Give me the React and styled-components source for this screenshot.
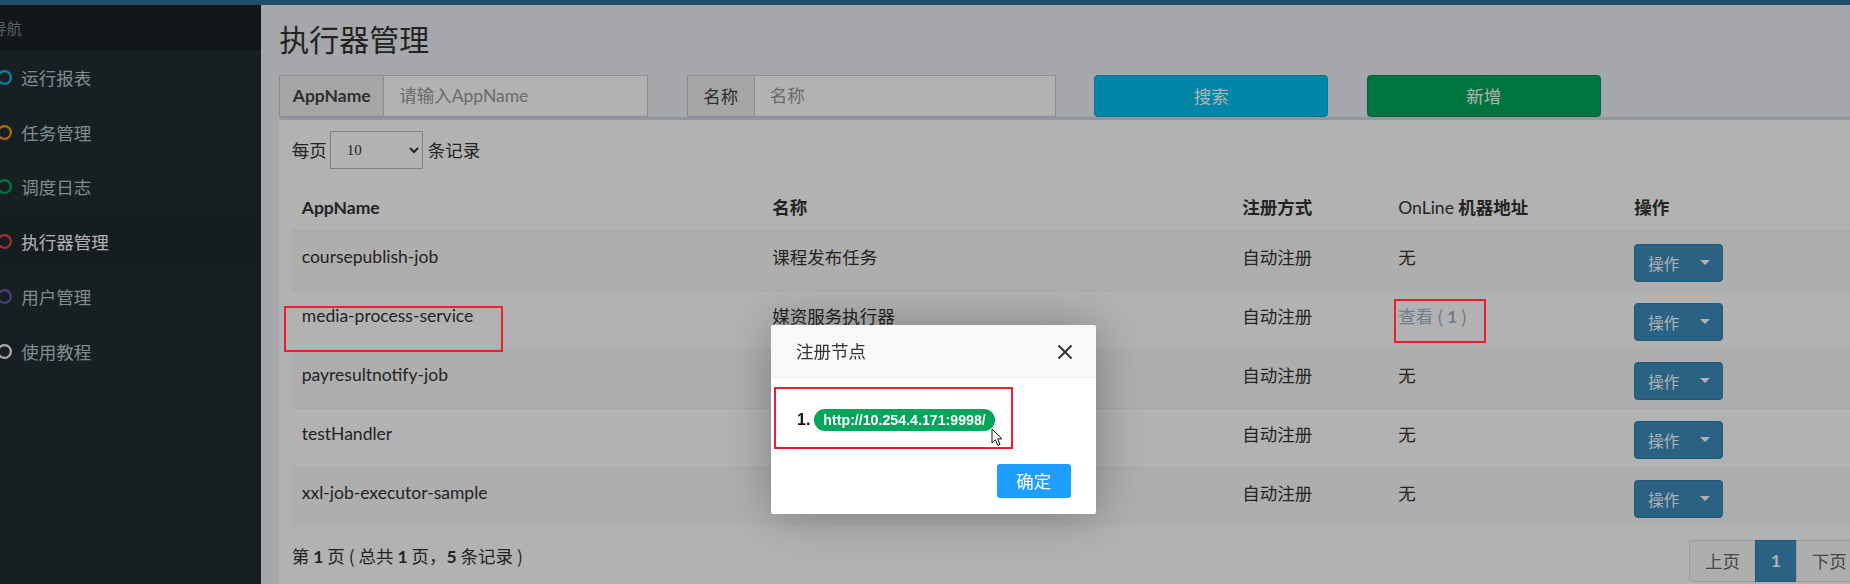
import React from "react";
import styled, { createGlobalStyle } from "styled-components";

const GlobalStyle = createGlobalStyle`
  * { box-sizing: border-box; }
  html, body {
    margin: 0;
    padding: 0;
    width: 1850px;
    height: 584px;
    overflow: hidden;
    background: #ecf0f5;
  }
  body {
    font-family: Lato, "Noto Sans CJK SC", sans-serif;
    font-size: 17.5px;
    line-height: 25px;
    color: #333;
  }
`;

const Shell = styled.div`
  margin-left: -27px;
  width: 1921px;
  height: 584px;
  display: flex;
  flex-direction: column;
`;

const TopBar = styled.div`
  flex: none;
  height: 5px;
  background: #2f6f98;
`;

const Main = styled.div`
  flex: 1;
  display: flex;
  min-height: 0;
`;

const Sidebar = styled.aside`
  flex: none;
  width: 287.5px;
  background: #222d32;
`;

const MenuHeader = styled.div`
  background: #1a2226;
  color: #7f8c97;
  font-family: "Noto Sans CJK SC", sans-serif;
  font-size: 15px;
  line-height: 20px;
  padding: 12.5px 25px 12.5px 18.75px;
`;

const MenuItem = styled.div`
  display: flex;
  align-items: center;
  gap: 4.5px;
  padding: 14.9px 6.25px 14.9px 18.75px;
  font-family: "Noto Sans CJK SC", sans-serif;
  font-size: 17.5px;
  line-height: 25px;
  color: ${(p) => (p.$active ? "#ffffff" : "#b8c7ce")};
  background: ${(p) => (p.$active ? "#202a2f" : "transparent")};
`;

const RingIcon = ({ color }) => (
  <svg width="25" height="25" viewBox="0 0 25 25">
    <circle cx="12.5" cy="12.5" r="6.4" fill="none" stroke={color} strokeWidth="2.3" />
  </svg>
);

const Content = styled.section`
  flex: 1;
  min-width: 0;
  padding: 17px 18.75px 0;
`;

const Title = styled.h1`
  margin: 0;
  font-family: "Noto Sans CJK SC", sans-serif;
  font-size: 30px;
  line-height: 33px;
  font-weight: 400;
  color: #333;
`;

const SearchRow = styled.div`
  display: flex;
  gap: 38.5px;
  margin-top: 19.5px;
  height: 42.5px;
`;

const InputGroup = styled.div`
  display: flex;
  width: 369px;
  border: 1.25px solid #ccc;
  background: #fff;
`;

const Addon = styled.span`
  flex: none;
  display: flex;
  align-items: center;
  justify-content: center;
  width: ${(p) => p.$w}px;
  background: #eee;
  border-right: 1.25px solid #ccc;
  color: #444;
  font-weight: ${(p) => (p.$bold ? 700 : 400)};
`;

const Input = styled.input`
  flex: 1;
  min-width: 0;
  border: 0;
  padding: 0 15px;
  font: inherit;
  background: transparent;
  color: #555;
  &::placeholder {
    color: #999;
  }
`;

const ActionBtn = styled.button`
  width: 234px;
  border: 1.25px solid ${(p) => p.$border};
  background: ${(p) => p.$bg};
  color: #fff;
  font-family: "Noto Sans CJK SC", sans-serif;
  font-size: 17.5px;
  border-radius: 3.75px;
  padding: 0;
`;

const Box = styled.div`
  background: #fff;
  border-top: 3.75px solid #d2d6de;
  border-radius: 3.75px;
  padding: 11px 12.5px 12.5px;
  height: 600px;
`;

const LengthRow = styled.div`
  display: flex;
  align-items: center;
  gap: 3px;
  height: 37.5px;
`;

const Select = styled.select`
  width: 93px;
  height: 37.5px;
  margin-right: 2px;
  font-family: "Liberation Serif", serif;
  font-size: 15px;
  padding: 0 12px;
  border: 1.25px solid #bbb;
  border-radius: 0;
  background: #fff;
  color: #333;
`;

const Table = styled.table`
  width: 100%;
  margin-top: 15.5px;
  border-collapse: collapse;
  table-layout: fixed;
`;

const Col = styled.col`
  width: ${(p) => (p.$w ? `${p.$w}px` : "auto")};
`;

const Th = styled.th`
  text-align: left;
  padding: 10px;
  font-weight: 700;
  line-height: 25px;
  border-bottom: 2.5px solid #f4f4f4;
`;

const Thin = styled.span`
  font-weight: 400;
`;

const Tr = styled.tr`
  background: ${(p) => (p.$odd ? "#f9f9f9" : "transparent")};
`;

const Td = styled.td`
  padding: 12.2px 10px 8.3px;
  vertical-align: top;
  border-top: 1.25px solid #f4f4f4;
  white-space: nowrap;
  overflow: hidden;
`;

const CnText = styled.span`
  font-family: "Noto Sans CJK SC", sans-serif;
`;

const ViewLink = styled.a`
  color: #9cb3c8;
  text-decoration: none;
  font-family: "Noto Sans CJK SC", sans-serif;
  b {
    font-family: Lato, sans-serif;
    font-weight: 700;
  }
`;

const OpBtn = styled.button`
  display: inline-flex;
  align-items: center;
  justify-content: space-between;
  width: 89px;
  height: 37.5px;
  padding: 0 12px 0 13px;
  background: #3c8dbc;
  border: 1.25px solid #367fa9;
  border-radius: 3.75px;
  color: #fff;
  font-family: "Noto Sans CJK SC", sans-serif;
  font-size: 15.5px;
  vertical-align: top;
`;

const Caret = styled.span`
  width: 0;
  height: 0;
  border-top: 5px solid #fff;
  border-left: 5px solid transparent;
  border-right: 5px solid transparent;
`;

const Footer = styled.div`
  display: flex;
  justify-content: space-between;
  align-items: flex-start;
  margin-top: 14px;
`;

const Info = styled.div`
  padding-top: 3px;
  font-family: "Noto Sans CJK SC", sans-serif;
  b {
    font-family: Lato, sans-serif;
    font-weight: 700;
  }
`;

const Pager = styled.ul`
  display: flex;
  margin: 0;
  padding: 0;
  list-style: none;
`;

const PageLink = styled.li`
  padding: 7.5px 15px;
  line-height: 25px;
  margin-left: -1.25px;
  border: 1.25px solid ${(p) => (p.$active ? "#367fa9" : "#ddd")};
  background: ${(p) => (p.$active ? "#3c8dbc" : "#fafafa")};
  color: ${(p) => (p.$active ? "#fff" : "#666")};
  font-weight: ${(p) => (p.$active ? 700 : 400)};
  font-family: ${(p) => (p.$active ? "Lato, sans-serif" : '"Noto Sans CJK SC", sans-serif')};
  &:first-child {
    border-radius: 3.75px 0 0 3.75px;
  }
`;

const Overlay = styled.div`
  position: fixed;
  inset: 0;
  background: rgba(0, 0, 0, 0.3);
  z-index: 10;
`;

const Modal = styled.div`
  position: fixed;
  left: 771px;
  top: 325px;
  width: 325px;
  background: #fff;
  border-radius: 2.5px;
  box-shadow: 1px 1px 50px rgba(0, 0, 0, 0.3);
  z-index: 20;
`;

const ModalTitle = styled.div`
  height: 52.5px;
  line-height: 51px;
  padding: 0 100px 0 25px;
  background: #f8f8f8;
  border-bottom: 1px solid #eee;
  border-radius: 2.5px 2.5px 0 0;
  font-family: "Noto Sans CJK SC", sans-serif;
  font-size: 17.5px;
  color: #333;
`;

const CloseBtn = styled.button`
  position: absolute;
  right: 23px;
  top: 19px;
  width: 16px;
  height: 16px;
  padding: 0;
  border: 0;
  background: none;
  display: flex;
`;

const ModalBody = styled.div`
  padding: 29px 25px 25px 26px;
`;

const NodeItem = styled.div`
  display: flex;
  align-items: center;
  gap: 4px;
  height: 26px;
`;

const NodeNum = styled.span`
  font-family: "Liberation Sans", Arial, sans-serif;
  font-weight: 700;
  font-size: 16px;
  line-height: 18px;
  color: #111;
`;

const Badge = styled.span`
  height: 22px;
  line-height: 22px;
  padding: 0 9px;
  border-radius: 11px;
  background: #00a65a;
  color: #fff;
  font-family: "Liberation Sans", Arial, sans-serif;
  font-weight: 700;
  font-size: 14.2px;
`;

const BtnArea = styled.div`
  display: flex;
  justify-content: flex-end;
  padding: 6px 25px 16px;
`;

const ConfirmBtn = styled.button`
  height: 34px;
  padding: 0 18.75px;
  background: #1e9fff;
  border: 1px solid #1e9fff;
  border-radius: 2.5px;
  color: #fff;
  font-family: "Noto Sans CJK SC", sans-serif;
  font-size: 17.5px;
`;

const Annotation = styled.div`
  position: fixed;
  left: ${(p) => p.$x}px;
  top: ${(p) => p.$y}px;
  width: ${(p) => p.$w}px;
  height: ${(p) => p.$h}px;
  border: 2px solid #e8222a;
  z-index: 30;
  pointer-events: none;
`;

const Cursor = styled.svg`
  position: fixed;
  left: 991px;
  top: 428px;
  z-index: 31;
`;

const menu = [
  { label: "运行报表", color: "#00c0ef" },
  { label: "任务管理", color: "#f39c12" },
  { label: "调度日志", color: "#00a65a" },
  { label: "执行器管理", color: "#dd4b39", active: true },
  { label: "用户管理", color: "#605ca8" },
  { label: "使用教程", color: "#f2f2f2" },
];

/* names of the last three rows are hidden behind the dialog in the reference */
const rows = [
  { app: "coursepublish-job", name: "课程发布任务", online: 0 },
  { app: "media-process-service", name: "媒资服务执行器", online: 1 },
  { app: "payresultnotify-job", name: "", online: 0 },
  { app: "testHandler", name: "", online: 0 },
  { app: "xxl-job-executor-sample", name: "", online: 0 },
];

export default function App() {
  return (
    <>
      <GlobalStyle />
      <Shell>
        <TopBar />
        <Main>
          <Sidebar>
            <MenuHeader>导航</MenuHeader>
            {menu.map((m) => (
              <MenuItem key={m.label} $active={m.active}>
                <RingIcon color={m.color} />
                <span>{m.label}</span>
              </MenuItem>
            ))}
          </Sidebar>
          <Content>
            <Title>执行器管理</Title>
            <SearchRow>
              <InputGroup>
                <Addon $w={104} $bold>AppName</Addon>
                <Input placeholder="请输入AppName" />
              </InputGroup>
              <InputGroup>
                <Addon $w={67}>
                  <CnText>名称</CnText>
                </Addon>
                <Input placeholder="名称" />
              </InputGroup>
              <ActionBtn $bg="#00c0ef" $border="#00acd6">搜索</ActionBtn>
              <ActionBtn $bg="#00a65a" $border="#008d4c">新增</ActionBtn>
            </SearchRow>
            <Box>
              <LengthRow>
                <CnText>每页</CnText>
                <Select defaultValue="10">
                  <option value="10">10</option>
                  <option value="25">25</option>
                  <option value="50">50</option>
                </Select>
                <CnText>条记录</CnText>
              </LengthRow>
              <Table>
                <colgroup>
                  <Col $w={470.5} />
                  <Col $w={470} />
                  <Col $w={156} />
                  <Col $w={236} />
                  <Col />
                </colgroup>
                <thead>
                  <tr>
                    <Th>AppName</Th>
                    <Th>
                      <CnText>名称</CnText>
                    </Th>
                    <Th>
                      <CnText>注册方式</CnText>
                    </Th>
                    <Th>
                      <Thin>OnLine</Thin> <CnText>机器地址</CnText>
                    </Th>
                    <Th>
                      <CnText>操作</CnText>
                    </Th>
                  </tr>
                </thead>
                <tbody>
                  {rows.map((r, i) => (
                    <Tr key={r.app} $odd={i % 2 === 0}>
                      <Td>{r.app}</Td>
                      <Td>
                        <CnText>{r.name}</CnText>
                      </Td>
                      <Td>
                        <CnText>自动注册</CnText>
                      </Td>
                      <Td>
                        {r.online ? (
                          <ViewLink href="#">
                            查看 ( <b>{r.online}</b> )
                          </ViewLink>
                        ) : (
                          <CnText>无</CnText>
                        )}
                      </Td>
                      <Td>
                        <OpBtn>
                          操作
                          <Caret />
                        </OpBtn>
                      </Td>
                    </Tr>
                  ))}
                </tbody>
              </Table>
              <Footer>
                <Info>
                  第 <b>1</b> 页 ( 总共 <b>1</b> 页，<b>5</b> 条记录 )
                </Info>
                <Pager>
                  <PageLink>上页</PageLink>
                  <PageLink $active>1</PageLink>
                  <PageLink>下页</PageLink>
                </Pager>
              </Footer>
            </Box>
          </Content>
        </Main>
      </Shell>

      <Overlay />

      <Modal>
        <ModalTitle>注册节点</ModalTitle>
        <CloseBtn aria-label="关闭">
          <svg width="16" height="16" viewBox="0 0 16 16">
            <path d="M1.5 1.5 L14.5 14.5 M14.5 1.5 L1.5 14.5" stroke="#333" strokeWidth="2" />
          </svg>
        </CloseBtn>
        <ModalBody>
          <NodeItem>
            <NodeNum>1.</NodeNum>
            <Badge>http://10.254.4.171:9998/</Badge>
          </NodeItem>
        </ModalBody>
        <BtnArea>
          <ConfirmBtn>确定</ConfirmBtn>
        </BtnArea>
      </Modal>

      <Annotation $x={284} $y={306} $w={219} $h={46} />
      <Annotation $x={1394} $y={299} $w={92} $h={44} />
      <Annotation $x={774} $y={387} $w={239} $h={62} />

      <Cursor width="13" height="19" viewBox="0 0 13 19">
        <path
          d="M1 1 L1 15 L4.4 11.8 L6.8 17.4 L9 16.4 L6.7 10.9 L11 10.9 Z"
          fill="#fff"
          stroke="#111"
          strokeWidth="1"
          strokeLinejoin="round"
        />
      </Cursor>
    </>
  );
}
